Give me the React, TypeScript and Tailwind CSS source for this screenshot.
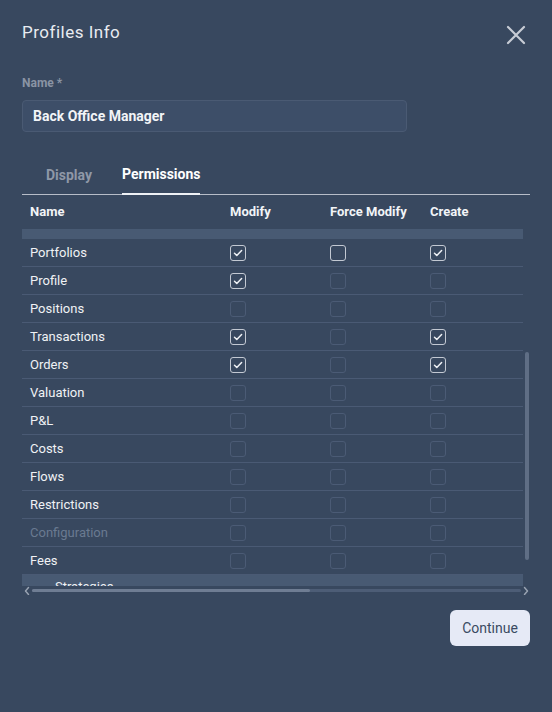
import { useState } from 'react';

type Perm = { name: string; modify: boolean; force: boolean | null; create: boolean; muted?: boolean };

const rows: Perm[] = [
  { name: 'Portfolios', modify: true, force: false, create: true },
  { name: 'Profile', modify: true, force: null, create: false },
  { name: 'Positions', modify: false, force: null, create: false },
  { name: 'Transactions', modify: true, force: null, create: true },
  { name: 'Orders', modify: true, force: null, create: true },
  { name: 'Valuation', modify: false, force: null, create: false },
  { name: 'P&L', modify: false, force: null, create: false },
  { name: 'Costs', modify: false, force: null, create: false },
  { name: 'Flows', modify: false, force: null, create: false },
  { name: 'Restrictions', modify: false, force: null, create: false },
  { name: 'Configuration', modify: false, force: null, create: false, muted: true },
  { name: 'Fees', modify: false, force: null, create: false },
];

function Check({ checked, enabled }: { checked: boolean; enabled: boolean }) {
  return (
    <div
      className={`w-4 h-4 rounded-[3px] border flex items-center justify-center ${
        enabled ? 'border-[#c3c9d3]' : 'border-[#4b5b75]'
      }`}
    >
      {checked && (
        <svg className="w-3 h-3" viewBox="0 0 12 12" fill="none">
          <path d="M2.5 6.3l2.3 2.2L9.6 3.6" stroke="#eef1f5" strokeWidth={1.5} strokeLinecap="round" strokeLinejoin="round" />
        </svg>
      )}
    </div>
  );
}

export default function App() {
  const [tab, setTab] = useState('permissions');

  return (
    <div
      className="w-[552px] h-[712px] bg-[#38485f] text-[#eef1f5] relative overflow-hidden"
      style={{ fontFamily: 'Roboto, "Liberation Sans", sans-serif' }}
    >
      <div className="flex items-start justify-between pl-[22px] pr-[24px] pt-[22px]">
        <h1 className="text-[17px] leading-5 tracking-[0.5px] text-[#e9ecf1]">Profiles Info</h1>
        <svg className="w-6 h-6 mt-[1px]" viewBox="0 0 24 24" fill="none">
          <path d="M4 4l16 16M20 4L4 20" stroke="#c7ccd5" strokeWidth={2.2} strokeLinecap="round" />
        </svg>
      </div>

      <div className="px-[22px] mt-[28px]">
        <label className="block text-[12px] font-bold text-[#8a94a4] leading-4">Name *</label>
        <div className="mt-[9px] w-[385px] h-[32px] rounded-[4px] border border-[#4a5a73] bg-[#3d4e68] flex items-center px-[10px]">
          <span className="text-[14px] font-bold text-[#f2f4f7]">Back Office Manager</span>
        </div>
      </div>

      <div className="mx-[22px] mt-[32px] border-b border-[#b7bdc8] flex">
        <button
          onClick={() => setTab('display')}
          className={`ml-[24px] pb-[8px] text-[14px] font-bold ${tab === 'display' ? 'text-white' : 'text-[#8f98a7]'}`}
        >
          Display
        </button>
        <button
          onClick={() => setTab('permissions')}
          className={`ml-[30px] w-[78px] pb-[8px] -mb-[1px] text-[14px] font-bold border-b-2 ${
            tab === 'permissions' ? 'text-white border-[#eef1f5]' : 'text-[#8f98a7] border-transparent'
          }`}
        >
          Permissions
        </button>
      </div>

      <div className="relative mx-[22px] h-[400px] overflow-hidden">
        <div className="w-[501px]">
          <div className="flex items-center h-[34px] text-[13px] font-bold text-[#f2f4f7]">
            <div className="w-[208px] pl-[8px]">Name</div>
            <div className="w-[100px]">Modify</div>
            <div className="w-[100px]">Force Modify</div>
            <div>Create</div>
          </div>
          <div className="h-[10px] bg-[#485a73]"></div>
          {rows.map(r => (
            <div key={r.name} className="flex items-center h-[28px] border-b border-[#4a5a74] text-[13px]">
              <div className={`w-[208px] pl-[8px] ${r.muted ? 'text-[#6a7a91]' : 'text-[#f0f2f5]'}`}>{r.name}</div>
              <div className="w-[100px]">
                <Check checked={r.modify} enabled={r.modify || r.name === 'Portfolios'} />
              </div>
              <div className="w-[100px]">
                <Check checked={false} enabled={r.force === false} />
              </div>
              <div>
                <Check checked={r.create} enabled={r.create} />
              </div>
            </div>
          ))}
          <div className="h-[28px] bg-[#485a73] text-[13px] leading-4 pl-[33px] pt-[4px] text-[#f0f2f5]">Strategies</div>
        </div>

        {/* vertical scrollbar */}
        <div className="absolute left-[503px] top-[157px] w-[4px] h-[208px] bg-[#5f6e85] rounded-sm"></div>

        {/* horizontal scrollbar */}
        <div className="absolute left-0 right-0 top-[391px] h-[9px] bg-[#38485f] flex items-center">
          <svg className="w-[8px] h-[10px] ml-[1px]" viewBox="0 0 8 10" fill="none">
            <path d="M5.5 1.5L2.5 5l3 3.5" stroke="#9aa4b3" strokeWidth={1.4} strokeLinecap="round" strokeLinejoin="round" />
          </svg>
          <div className="flex-1 h-[3px] ml-[1px] mr-[1px] bg-[#4d5d76] rounded-full relative">
            <div className="absolute left-0 top-0 h-[3px] w-[278px] bg-[#6f7d93] rounded-full"></div>
          </div>
          <svg className="w-[8px] h-[10px]" viewBox="0 0 8 10" fill="none">
            <path d="M2.5 1.5L5.5 5l-3 3.5" stroke="#9aa4b3" strokeWidth={1.4} strokeLinecap="round" strokeLinejoin="round" />
          </svg>
        </div>
      </div>

      <div className="flex justify-end px-[22px] mt-[15px]">
        <button className="h-[36px] w-[80px] rounded-[6px] bg-[#e6eaf6] text-[14px] text-[#3a4a62]">Continue</button>
      </div>
    </div>
  );
}
